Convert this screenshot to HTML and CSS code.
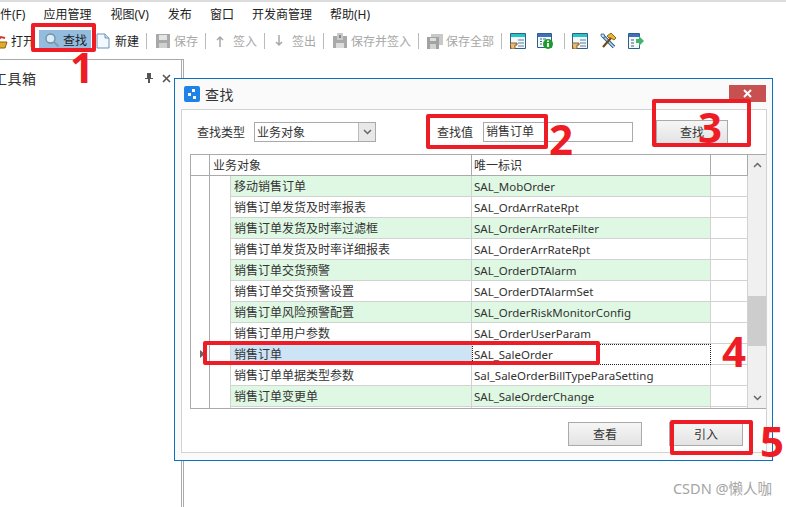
FILE: index.html
```html
<!DOCTYPE html>
<html lang="zh-CN">
<head>
  <meta charset="UTF-8" />
  <title>查找</title>
  <link rel="stylesheet" href="styles.css">
</head>
<body>
  <div class="app">
    <!-- 菜单 -->
    <nav class="menu">
      <span class="menu-file">文件(F)</span>
      <span class="menu-app">应用管理</span>
      <span class="menu-view">视图(V)</span>
      <span>发布</span>
      <span>窗口</span>
      <span>开发商管理</span>
      <span>帮助(H)</span>
    </nav>

    <!-- 工具栏 -->
    <div class="toolbar">
      <div class="tool tool-open">
        <svg width="14" height="16" viewBox="0 0 14 16"><path d="M0 9h13l-2 6H1z" fill="#e0ad2a" stroke="#8a6410"/><path d="M3 8l4-4 4 1" fill="none" stroke="#d23c2a" stroke-width="2"/></svg>
        <span>打开</span>
      </div>
      <div class="tool tool-active">
        <svg width="16" height="16" viewBox="0 0 16 16"><circle cx="6.500" cy="6.500" r="4.500" fill="#dcecf6" stroke="#6d8ea3" stroke-width="1.300"/><path d="M10 10l4.500 4.500" stroke="#8a9aa5" stroke-width="2.200"/></svg>
        <span>查找</span>
      </div>
      <div class="tool tool-new">
        <svg width="14" height="16" viewBox="0 0 14 16"><path d="M1 1h8l4 4v10H1z" fill="#f2f8fd" stroke="#6b93b8"/><path d="M9 1v4h4" fill="#cfe2f2" stroke="#6b93b8"/></svg>
        <span>新建</span>
      </div>
      <i class="sep"></i>
      <div class="tool tool-off">
        <svg width="16" height="16" viewBox="0 0 16 16"><path d="M1 1h14v14H1z" fill="#a9a9a9"/><path d="M4 2h8v5H4z" fill="#e4e4e4"/><path d="M4 10h8v5H4z" fill="#d0d0d0"/></svg>
        <span>保存</span>
      </div>
      <i class="sep"></i>
      <div class="tool tool-off tool-wide">
        <svg width="12" height="14" viewBox="0 0 12 14"><path d="M6 13V3M3 6l3-3 3 3" fill="none" stroke="#a8a8a8" stroke-width="1.500"/></svg>
        <span>签入</span>
      </div>
      <i class="sep"></i>
      <div class="tool tool-off tool-wide">
        <svg width="12" height="14" viewBox="0 0 12 14"><path d="M6 1v10M3 8l3 3 3-3" fill="none" stroke="#a8a8a8" stroke-width="1.500"/></svg>
        <span>签出</span>
      </div>
      <i class="sep"></i>
      <div class="tool tool-off">
        <svg width="16" height="16" viewBox="0 0 16 16"><path d="M1 3h14v12H1z" fill="#a9a9a9"/><path d="M5 0h6v7H5z" fill="#c9c9c9"/><path d="M7 2h2v3H7z" fill="#888"/><path d="M4 10h8v5H4z" fill="#dcdcdc"/></svg>
        <span>保存并签入</span>
      </div>
      <i class="sep"></i>
      <div class="tool tool-off">
        <svg width="16" height="16" viewBox="0 0 16 16"><path d="M4 1h12v11H4z" fill="#c9c9c9"/><path d="M0 4h12v12H0z" fill="#a2a2a2"/><path d="M3 5h6v3H3z" fill="#dedede"/><path d="M3 11h6v5H3z" fill="#d2d2d2"/></svg>
        <span>保存全部</span>
      </div>
      <i class="sep"></i>
      <svg class="tool-icon" width="16" height="16" viewBox="0 0 16 16"><path d="M.5.500h15v15H.5z" fill="#f4f8fb" stroke="#2f5f86"/><path d="M1 1h14v3H1z" fill="#22c6c6"/><path d="M8 7h6M8 10h6M8 13h6" stroke="#5b7f9c"/><path d="M0 10h7v2h-2v4H1z" fill="#e9bb78" stroke="#6f4510" stroke-width=".8"/></svg>
      <svg class="tool-icon icon-info" width="16" height="16" viewBox="0 0 16 16"><path d="M.5.500h14v14H.5z" fill="#f4f8fb" stroke="#2f5f86"/><path d="M1 1h13v3H1z" fill="#3f6fc0"/><path d="M3 6h2M3 8.500h2M3 11h2M6 6h3" stroke="#41627d"/><circle cx="11" cy="11" r="5" fill="#1f9a2e"/><path d="M11 10v4M11 7.500v1.500" stroke="#fff" stroke-width="1.800"/></svg>
      <i class="sep sep-icons"></i>
      <svg class="tool-icon" width="16" height="16" viewBox="0 0 16 16"><path d="M.5.500h15v15H.5z" fill="#f4f8fb" stroke="#2f5f86"/><path d="M1 1h14v3H1z" fill="#22c6c6"/><path d="M8 7h6M8 10h6M8 13h6" stroke="#5b7f9c"/><path d="M0 10h7v2h-2v4H1z" fill="#e9bb78" stroke="#6f4510" stroke-width=".8"/></svg>
      <svg class="tool-icon tool-gap" width="16" height="16" viewBox="0 0 16 16"><path d="M3 3l11 11" stroke="#2f5f86" stroke-width="3.500"/><path d="M3 3l11 11" stroke="#bcd9ee" stroke-width="1.500"/><path d="M1 1l3 0 1 3-2 1-2-2z" fill="#bcd9ee" stroke="#2f5f86" stroke-width=".8"/><path d="M11 5L3 14" stroke="#6b4a16" stroke-width="2.200"/><path d="M7 3l4-3 5 5-2 2-3-2-2 0z" fill="#f0b429" stroke="#6b4a16" stroke-width=".8"/></svg>
      <svg class="tool-icon tool-gap" width="16" height="16" viewBox="0 0 16 16"><path d="M.5.500h11v15H.5z" fill="#f4f8fb" stroke="#2f5f86"/><path d="M1 1h10v3H1z" fill="#3f6fc0"/><path d="M3 7h3M3 10h3M3 13h3" stroke="#41627d"/><path d="M8 6h3V3l5 5-5 5v-3H8z" fill="#45b36b"/></svg>
    </div>

    <!-- 工具箱 -->
    <aside class="toolbox">
      <div class="toolbox-head">
        <span class="toolbox-title">工具箱</span>
        <svg width="8" height="10" viewBox="0 0 8 10"><path d="M2 0h4v5h2v1H5v4H3V6H0V5h2z" fill="#555"/></svg>
        <svg width="9" height="9" viewBox="0 0 9 9"><path d="M1 1l7 7M8 1L1 8" stroke="#555" stroke-width="1.600"/></svg>
      </div>
    </aside>
  </div>

  <!-- 查找对话框 -->
  <section class="dialog">
    <header class="dialog-title">
      <span class="dialog-logo"><i></i><i></i><i></i></span>
      <span>查找</span>
      <span class="dialog-close">
        <svg width="9" height="9" viewBox="0 0 9 9"><path d="M1 1l7 7M8 1L1 8" stroke="#fff" stroke-width="2"/></svg>
      </span>
    </header>

    <div class="dialog-body">
      <div class="search-row">
        <label class="search-label">查找类型</label>
        <div class="select">
          <span>业务对象</span>
          <span class="select-arrow">
            <svg width="9" height="6" viewBox="0 0 9 6"><path d="M1 1l3.500 3.500L8 1" fill="none" stroke="#666" stroke-width="1.500"/></svg>
          </span>
        </div>
        <label class="search-label search-value">查找值</label>
        <div class="input">销售订单</div>
        <button class="btn btn-search">查找</button>
      </div>

      <div class="grid">
        <div class="grid-main">
          <div class="row row-head">
            <div class="cell-mark"></div>
            <div class="cell-name">业务对象</div>
            <div class="cell-id">唯一标识</div>
            <div class="cell-rest"></div>
          </div>
          <div class="row row-green"><div class="cell-mark"></div><div class="cell-indent"></div><div class="cell-text">移动销售订单</div><div class="cell-id">SAL_MobOrder</div><div class="cell-rest"></div></div>
          <div class="row"><div class="cell-mark"></div><div class="cell-indent"></div><div class="cell-text">销售订单发货及时率报表</div><div class="cell-id">SAL_OrdArrRateRpt</div><div class="cell-rest"></div></div>
          <div class="row row-green"><div class="cell-mark"></div><div class="cell-indent"></div><div class="cell-text">销售订单发货及时率过滤框</div><div class="cell-id">SAL_OrderArrRateFilter</div><div class="cell-rest"></div></div>
          <div class="row"><div class="cell-mark"></div><div class="cell-indent"></div><div class="cell-text">销售订单发货及时率详细报表</div><div class="cell-id">SAL_OrderArrRateRpt</div><div class="cell-rest"></div></div>
          <div class="row row-green"><div class="cell-mark"></div><div class="cell-indent"></div><div class="cell-text">销售订单交货预警</div><div class="cell-id">SAL_OrderDTAlarm</div><div class="cell-rest"></div></div>
          <div class="row"><div class="cell-mark"></div><div class="cell-indent"></div><div class="cell-text">销售订单交货预警设置</div><div class="cell-id">SAL_OrderDTAlarmSet</div><div class="cell-rest"></div></div>
          <div class="row row-green"><div class="cell-mark"></div><div class="cell-indent"></div><div class="cell-text">销售订单风险预警配置</div><div class="cell-id">SAL_OrderRiskMonitorConfig</div><div class="cell-rest"></div></div>
          <div class="row"><div class="cell-mark"></div><div class="cell-indent"></div><div class="cell-text">销售订单用户参数</div><div class="cell-id">SAL_OrderUserParam</div><div class="cell-rest"></div></div>
          <div class="row row-current"><div class="cell-mark"><i class="row-arrow"></i></div><div class="cell-indent"></div><div class="cell-text">销售订单</div><div class="cell-id">SAL_SaleOrder</div><div class="cell-rest"></div></div>
          <div class="row"><div class="cell-mark"></div><div class="cell-indent"></div><div class="cell-text">销售订单单据类型参数</div><div class="cell-id">Sal_SaleOrderBillTypeParaSetting</div><div class="cell-rest"></div></div>
          <div class="row row-green"><div class="cell-mark"></div><div class="cell-indent"></div><div class="cell-text">销售订单变更单</div><div class="cell-id">SAL_SaleOrderChange</div><div class="cell-rest"></div></div>
          <div class="row"><div class="cell-mark"></div><div class="cell-indent"></div><div class="cell-text"></div><div class="cell-id"></div><div class="cell-rest"></div></div>
        </div>
        <div class="scrollbar">
          <svg width="9" height="6" viewBox="0 0 9 6"><path d="M1 5l3.500-3.500L8 5" fill="none" stroke="#666" stroke-width="1.500"/></svg>
          <div class="scroll-track"><div class="scroll-thumb"></div></div>
          <svg width="9" height="6" viewBox="0 0 9 6"><path d="M1 1l3.500 3.500L8 1" fill="none" stroke="#666" stroke-width="1.500"/></svg>
        </div>
      </div>

      <div class="dialog-foot">
        <button class="btn">查看</button>
        <button class="btn">引入</button>
      </div>
    </div>
  </section>

  <!-- 红色标注 -->
  <div class="mark mark-box1"></div>
  <div class="mark mark-box2"></div>
  <div class="mark mark-box3"></div>
  <div class="mark mark-box4"></div>
  <div class="mark mark-box5"></div>
  <span class="num num1">1</span>
  <span class="num num2">2</span>
  <span class="num num3">3</span>
  <span class="num num4">4</span>
  <span class="num num5">5</span>

  <div class="watermark">CSDN @懒人咖</div>
</body>
</html>
```

FILE: styles.css
```css
* {
  box-sizing: border-box;
  font-family: "Noto Sans", "Noto Sans CJK SC", sans-serif;
}

html, body {
  margin: 0;
  height: 100%;
  overflow: hidden;
}

body {
  position: relative;
  background: #fff;
  color: #333;
  font-size: 12px;
}

.app {
  height: 507px;
  border-top: 2px solid #dcdcdc;
  display: flex;
  flex-direction: column;
}

.menu {
  display: flex;
  height: 24px;
  align-items: center;
  gap: 18px;
  color: #222;
}

.menu-file {
  margin-left: -12px;
}

.menu-app,
.menu-view {
  margin-right: 1px;
}

.toolbar {
  display: flex;
  align-items: center;
  height: 26px;
  margin-top: 2px;
  color: #222;
}

.tool {
  display: flex;
  align-items: center;
  gap: 3px;
  height: 22px;
  flex: none;
  white-space: nowrap;
}

.tool-open {
  margin-left: -6px;
  width: 45px;
}

.tool-active {
  width: 52px;
  height: 20px;
  margin-bottom: 2px;
  padding-left: 5px;
  background: #94bcdf;
}

.tool-new {
  margin-left: 5px;
  gap: 5px;
}

.tool-off {
  color: #a8a8a8;
}

.tool-wide {
  gap: 7px;
}

.sep {
  flex: none;
  width: 1px;
  height: 16px;
  margin: 0 8px 0 7px;
  background: #bbb;
}

.sep-icons {
  margin: 0 7px 0 11px;
}

.tool-gap {
  margin-left: 12px;
}

.icon-info {
  margin-left: 11px;
}

.tool-icon {
  flex: none;
}

.toolbox {
  flex: 1;
  width: 184px;
  margin-top: 5px;
  border-top: 1px solid #aaa;
  border-right: 3px double #aaa;
}

.toolbox-head {
  display: flex;
  align-items: center;
  gap: 9px;
  height: 36px;
  padding-right: 10px;
}

.toolbox-title {
  flex: 1;
  margin-left: -7px;
  font-size: 14px;
  letter-spacing: 0.5px;
}

/* 对话框 */
.dialog {
  position: absolute;
  left: 174px;
  top: 78px;
  width: 599px;
  height: 383px;
  padding: 0 5px 7px 6px;
  display: flex;
  flex-direction: column;
  background: #fafafa;
  border: 1px solid #0a72c0;
}

.dialog-title {
  display: flex;
  align-items: center;
  gap: 5px;
  height: 30px;
  padding-left: 3px;
  font-size: 14px;
  letter-spacing: 0.5px;
}

.dialog-logo {
  display: block;
  position: relative;
  width: 16px;
  height: 16px;
  border-radius: 2px;
  background: #1e82e6;
}

.dialog-logo i {
  position: absolute;
  width: 3px;
  height: 3px;
  background: #fff;
}

.dialog-logo i:nth-child(1) { left: 8px; top: 3px; }
.dialog-logo i:nth-child(2) { left: 4px; top: 7px; }
.dialog-logo i:nth-child(3) { left: 9px; top: 10px; }

.dialog-close {
  position: absolute;
  right: 6px;
  top: 6px;
  width: 37px;
  height: 17px;
  display: flex;
  align-items: center;
  justify-content: center;
  background: #c75050;
}

.dialog-body {
  flex: 1;
  display: flex;
  flex-direction: column;
  padding: 0 0 0 8px;
  background: #fff;
  border: 1px solid #d2d2d2;
}

.search-row {
  display: flex;
  align-items: center;
  height: 44px;
  padding-left: 7px;
  padding-bottom: 1px;
}

.search-label {
  color: #333;
}

.search-value {
  margin-left: 61px;
}

.select {
  display: flex;
  align-items: center;
  justify-content: space-between;
  width: 122px;
  height: 20px;
  margin-left: 9px;
  padding-left: 2px;
  border: 1px solid #aaa;
}

.select-arrow {
  display: flex;
  align-items: center;
  justify-content: center;
  width: 17px;
  height: 18px;
  background: #e8e8e8;
  border-left: 1px solid #bbb;
}

.input {
  width: 150px;
  height: 20px;
  margin-left: 10px;
  padding-left: 2px;
  line-height: 18px;
  border: 1px solid #aaa;
}

.btn {
  width: 74px;
  height: 24px;
  padding: 0;
  font-size: 12px;
  color: #333;
  background: linear-gradient(#f6f6f6, #e3e3e3);
  border: 1px solid #aaa;
}

.btn-search {
  width: 72px;
  margin-left: 23px;
}

.grid {
  display: flex;
  height: 255px;
}

.grid-main {
  flex: 1;
  overflow: hidden;
  border-left: 1px solid #aaa;
  border-top: 1px solid #aaa;
  border-bottom: 1px solid #aaa;
}

.row {
  display: flex;
  flex: none;
  height: 21px;
  background: #fff;
}

.row > div {
  flex: none;
  padding: 0 3px;
  line-height: 21px;
  white-space: nowrap;
  overflow: hidden;
  border-bottom: 1px solid #d2d2d2;
  border-right: 1px solid #d2d2d2;
}

.row-head {
  height: 21px;
}

.row-head > div {
  border-bottom: 1px solid #aaa;
  border-right: 1px solid #aaa;
}

.row > .cell-mark {
  position: relative;
  width: 19px;
  padding: 0;
  background: #fff;
  border-bottom: 0;
  border-right: 1px solid #aaa;
}

.row-head > .cell-mark {
  border-bottom: 1px solid #aaa;
}

.row > .cell-indent {
  width: 21px;
  background: #fff;
  border-bottom: 0;
}

.row > .cell-name {
  width: 262px;
}

.row > .cell-text {
  width: 241px;
}

.row > .cell-id {
  width: 239px;
  padding-left: 2px;
  font-size: 11.5px;
}

.row-head > .cell-id {
  font-size: 12px;
}

.row > .cell-rest {
  flex: 1;
  background: #fff;
}

.row-green > .cell-text,
.row-green > .cell-id {
  background: #dff8e3;
}

.row-current > .cell-text {
  background: #cde4f7;
}

.row-current > .cell-id {
  padding-left: 1px;
  line-height: 19px;
  border: 1px dotted #222;
}

.row-arrow {
  position: absolute;
  left: 9px;
  top: 6px;
  border: 4px solid transparent;
  border-left: 5px solid #666;
  border-right: 0;
}

.scrollbar {
  flex: none;
  width: 18px;
  display: flex;
  flex-direction: column;
  align-items: center;
  padding: 7px 0;
  gap: 7px;
  background: #f0f0f0;
  border-bottom: 1px solid #aaa;
  border-top: 1px solid #aaa;
}

.scroll-track {
  flex: 1;
  width: 100%;
  padding-top: 121px;
}

.scroll-thumb {
  height: 50px;
  background: #cdcdcd;
}

.dialog-foot {
  flex: 1;
  display: flex;
  justify-content: flex-end;
  align-items: center;
  gap: 27px;
  padding-right: 23px;
  padding-top: 6px;
}

/* 红色标注 */
.mark {
  position: absolute;
  border: 4px solid #ee1c25;
  border-radius: 2px;
}

.mark-box1 { left: 31px; top: 23px; width: 65px; height: 29px; }
.mark-box2 { left: 426px; top: 114px; width: 122px; height: 35px; }
.mark-box3 { left: 652px; top: 99px; width: 99px; height: 48px; }
.mark-box4 { left: 203px; top: 341px; width: 397px; height: 24px; }
.mark-box5 { left: 670px; top: 420px; width: 83px; height: 35px; }

.num {
  position: absolute;
  font-weight: 700;
  font-size: 42px;
  line-height: 44px;
  color: #ee1c25;
}

.num1 { left: 70px; top: 45px; }
.num2 { left: 549px; top: 117px; }
.num3 { left: 698px; top: 105px; }
.num4 { left: 722px; top: 329px; }
.num5 { left: 760px; top: 419px; }

.watermark {
  position: absolute;
  right: 14px;
  bottom: 9px;
  font-size: 14.5px;
  color: #a5a5a5;
}
```
